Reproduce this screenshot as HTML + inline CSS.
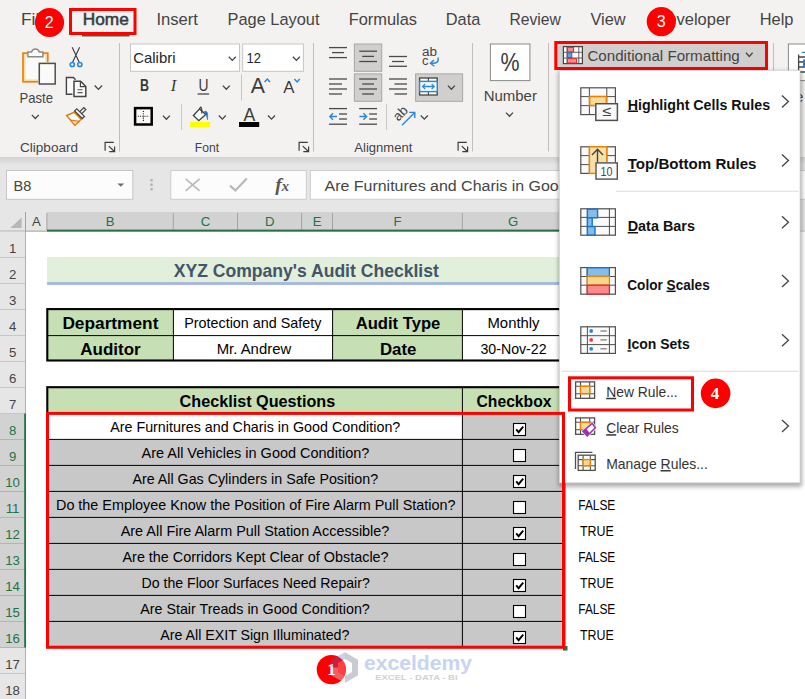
<!DOCTYPE html>
<html lang="en"><head><meta charset="utf-8"><title>Excel - Conditional Formatting New Rule</title>
<style>
html,body{margin:0;padding:0;background:#fff;overflow:hidden}
svg{display:block}
text{white-space:pre}
</style></head>
<body>
<svg width="805" height="699" viewBox="0 0 805 699">
<defs>
<linearGradient id="ribsh" x1="0" y1="0" x2="0" y2="1"><stop offset="0" stop-color="#d2d2d2"/><stop offset="1" stop-color="#e6e6e6"/></linearGradient>
<filter id="msh" x="-5%" y="-5%" width="110%" height="110%"><feGaussianBlur stdDeviation="2.2"/></filter>
</defs>
<rect x="0" y="0" width="805" height="157" fill="#f3f2f1" />
<rect x="0" y="157" width="805" height="8" fill="url(#ribsh)" />
<rect x="0" y="164" width="805" height="48" fill="#e6e6e6" />
<text x="21" y="25.2" font-family="'Liberation Sans',sans-serif" font-size="16.3" fill="#444444" textLength="28" lengthAdjust="spacingAndGlyphs" >File</text>
<text x="82.8" y="25.2" font-family="'Liberation Sans',sans-serif" font-size="16.4" fill="#3c3c3c" textLength="46" lengthAdjust="spacingAndGlyphs" stroke="#3c3c3c" stroke-width="0.55">Home</text>
<rect x="82" y="34.3" width="47.5" height="2.2" fill="#217346" />
<text x="156.4" y="25.2" font-family="'Liberation Sans',sans-serif" font-size="16.3" fill="#444444" textLength="41.6" lengthAdjust="spacingAndGlyphs" >Insert</text>
<text x="227.5" y="25.2" font-family="'Liberation Sans',sans-serif" font-size="16.3" fill="#444444" textLength="92" lengthAdjust="spacingAndGlyphs" >Page Layout</text>
<text x="348.7" y="25.2" font-family="'Liberation Sans',sans-serif" font-size="16.3" fill="#444444" textLength="68.3" lengthAdjust="spacingAndGlyphs" >Formulas</text>
<text x="445.8" y="25.2" font-family="'Liberation Sans',sans-serif" font-size="16.3" fill="#444444" textLength="34.5" lengthAdjust="spacingAndGlyphs" >Data</text>
<text x="509.5" y="25.2" font-family="'Liberation Sans',sans-serif" font-size="16.3" fill="#444444" textLength="51.4" lengthAdjust="spacingAndGlyphs" >Review</text>
<text x="590.4" y="25.2" font-family="'Liberation Sans',sans-serif" font-size="16.3" fill="#444444" textLength="35.2" lengthAdjust="spacingAndGlyphs" >View</text>
<text x="655.5" y="25.2" font-family="'Liberation Sans',sans-serif" font-size="16.3" fill="#444444" textLength="75.1" lengthAdjust="spacingAndGlyphs" >Developer</text>
<text x="759.7" y="25.2" font-family="'Liberation Sans',sans-serif" font-size="16.3" fill="#444444" textLength="33.8" lengthAdjust="spacingAndGlyphs" >Help</text>
<rect x="23" y="53.1" width="24.8" height="28.7" fill="#fbdf9d" stroke="#e8821a" stroke-width="1.7" />
<rect x="25.6" y="55.6" width="19.6" height="23.8" fill="#fafafa" />
<path d="M27.9 56.7 V52 H31.6 A3.9 3.9 0 0 1 39.2 52 H42.9 V56.7 Z" fill="#fafafa" stroke="#8a8a8a" stroke-width="1.4" />
<rect x="38" y="62" width="18.4" height="23.4" fill="#f3f2f1" />
<rect x="39.3" y="63.4" width="15.9" height="20.6" fill="#fafafa" stroke="#4f4f4f" stroke-width="1.5" />
<text x="19.5" y="103" font-family="'Liberation Sans',sans-serif" font-size="15" fill="#444444" textLength="33.5" lengthAdjust="spacingAndGlyphs" >Paste</text>
<path d="M31.799999999999997 114.9 L35.3 118.5 L38.8 114.9" fill="none" stroke="#444" stroke-width="1.3" />
<path d="M72.2 47.2 L79.2 62.2 M79.6 47.2 L72.6 62.2" fill="none" stroke="#444" stroke-width="1.2" />
<circle cx="72.3" cy="64.5" r="2.1" fill="none" stroke="#1e88e0" stroke-width="1.5"/>
<circle cx="79.8" cy="64.5" r="2.1" fill="none" stroke="#1e88e0" stroke-width="1.5"/>
<path d="M72.4 94.2 H66.4 V77.5 H73.4 L75.6 79.8" fill="#fafafa" stroke="#444" stroke-width="1.4" />
<path d="M74 81.3 H80.6 L85.8 86.5 V96.6 H74 Z" fill="#fafafa" stroke="#444" stroke-width="1.5" />
<path d="M80.4 81.6 V86.6 H85.6" fill="none" stroke="#444" stroke-width="1.2" />
<path d="M77.4 89.7 H82.6 M77.4 92.6 H82.6" fill="none" stroke="#555" stroke-width="1.1" />
<path d="M94.7 85.45 L98.4 89.35000000000001 L102.10000000000001 85.45" fill="none" stroke="#444" stroke-width="1.3" />
<path d="M66.6 115.5 L74 112.3 L81.2 119.3 L74.9 125.3 Z" fill="#fafafa" stroke="#e07a10" stroke-width="1.4" />
<path d="M70.6 120 L79 121.4 L74.9 125.3 Z" fill="#fbdf9d" stroke="#e07a10" stroke-width="1.1" />
<path d="M74.6 110.9 L76.8 108.8 L84.4 116.4 L82.2 118.5 Z" fill="#fafafa" stroke="#444" stroke-width="1.3" />
<path d="M79.8 111.6 L83.8 107.6 L85.8 109.6 L81.8 113.6" fill="none" stroke="#444" stroke-width="1.3" />
<text x="20" y="151.8" font-family="'Liberation Sans',sans-serif" font-size="12.8" fill="#444444" textLength="58" lengthAdjust="spacingAndGlyphs" >Clipboard</text>
<path d="M105.1 150.70000000000002 V142.3 H113.8" fill="none" stroke="#3c3c3c" stroke-width="1.2" />
<path d="M108.8 146.10000000000002 L114.39999999999999 151.5 M114.6 146.4 V151.60000000000002 H109.3" fill="none" stroke="#3c3c3c" stroke-width="1.2" />
<line x1="119.5" y1="43" x2="119.5" y2="151.5" stroke="#c0bfbe" stroke-width="1" />
<rect x="130.5" y="44" width="109" height="27.3" fill="#fff" stroke="#c6c5c4" stroke-width="1" />
<rect x="242.7" y="44" width="60.7" height="27.3" fill="#fff" stroke="#c6c5c4" stroke-width="1" />
<text x="133.2" y="62.5" font-family="'Liberation Sans',sans-serif" font-size="14.4" fill="#262626" textLength="42.3" lengthAdjust="spacingAndGlyphs" >Calibri</text>
<path d="M228.8 56.800000000000004 L232.3 60.4 L235.8 56.800000000000004" fill="none" stroke="#444" stroke-width="1.3" />
<text x="246.6" y="62.5" font-family="'Liberation Sans',sans-serif" font-size="14.4" fill="#262626" textLength="14.4" lengthAdjust="spacingAndGlyphs" >12</text>
<path d="M292.9 56.800000000000004 L296.4 60.4 L299.9 56.800000000000004" fill="none" stroke="#444" stroke-width="1.3" />
<text x="140" y="91.3" font-family="'Liberation Sans',sans-serif" font-size="15.6" fill="#3b3b3b" font-weight="bold" textLength="9" lengthAdjust="spacingAndGlyphs" >B</text>
<text x="170.8" y="91.3" font-family="'Liberation Serif',serif" font-size="16.5" fill="#3b3b3b" font-style="italic" >I</text>
<text x="198.4" y="90.6" font-family="'Liberation Sans',sans-serif" font-size="15.6" fill="#3b3b3b" textLength="10" lengthAdjust="spacingAndGlyphs" >U</text>
<rect x="197.6" y="93.4" width="11.5" height="1.2" fill="#3b3b3b" />
<path d="M222.8 85.60000000000001 L226.3 89.2 L229.8 85.60000000000001" fill="none" stroke="#444" stroke-width="1.3" />
<line x1="241.5" y1="74.3" x2="241.5" y2="100.5" stroke="#c8c7c6" stroke-width="1" />
<text x="250.8" y="93" font-family="'Liberation Sans',sans-serif" font-size="21.6" fill="#3b3b3b" textLength="14.2" lengthAdjust="spacingAndGlyphs" >A</text>
<path d="M264.6 82 L267.3 79 L270 82" fill="none" stroke="#2b88d8" stroke-width="1.5" />
<text x="283.2" y="93" font-family="'Liberation Sans',sans-serif" font-size="16.8" fill="#3b3b3b" textLength="11.2" lengthAdjust="spacingAndGlyphs" >A</text>
<path d="M294.4 79 L297.1 82 L299.8 79" fill="none" stroke="#2b88d8" stroke-width="1.5" />
<rect x="135.1" y="108.1" width="16.6" height="16.4" fill="#fafafa" stroke="#000" stroke-width="2.5" />
<path d="M143.4 111 V122 M137.8 116.3 H149" fill="none" stroke="#222" stroke-width="1.1" stroke-dasharray="1.1 1.1"/>
<path d="M162.9 115.60000000000001 L166.4 119.2 L169.9 115.60000000000001" fill="none" stroke="#444" stroke-width="1.3" />
<line x1="181.6" y1="104" x2="181.6" y2="130" stroke="#c8c7c6" stroke-width="1" />
<path d="M193.4 115.5 L199.6 108.9 L205.7 114.4 L198.8 120.7 Z" fill="#fafafa" stroke="#3c3c3c" stroke-width="1.3" />
<path d="M199.6 109.6 Q199.8 107 200.9 107.2 Q201.9 107.4 201.8 113.6" fill="none" stroke="#3c3c3c" stroke-width="1.2" />
<path d="M204.4 111.4 Q206.2 110.4 207.4 112.8 Q208 116 207.5 119.8 Q206.6 115 205.4 113.6 Z" fill="#1e73c8" stroke="#1e73c8" stroke-width="0.6" />
<rect x="190" y="122" width="20.2" height="5" fill="#ffff00" />
<path d="M218.8 115.5 L222.3 119.1 L225.8 115.5" fill="none" stroke="#444" stroke-width="1.3" />
<text x="243.4" y="121" font-family="'Liberation Sans',sans-serif" font-size="17.6" fill="#3b3b3b" textLength="11.8" lengthAdjust="spacingAndGlyphs" >A</text>
<rect x="239" y="122" width="20.2" height="5" fill="#000" />
<path d="M268.0 115.5 L271.5 119.1 L275.0 115.5" fill="none" stroke="#444" stroke-width="1.3" />
<text x="194.8" y="151.8" font-family="'Liberation Sans',sans-serif" font-size="12.8" fill="#444444" textLength="24.2" lengthAdjust="spacingAndGlyphs" >Font</text>
<path d="M299.1 150.70000000000002 V142.3 H307.8" fill="none" stroke="#3c3c3c" stroke-width="1.2" />
<path d="M302.8 146.10000000000002 L308.40000000000003 151.5 M308.6 146.4 V151.60000000000002 H303.3" fill="none" stroke="#3c3c3c" stroke-width="1.2" />
<line x1="313.5" y1="43" x2="313.5" y2="151.5" stroke="#c0bfbe" stroke-width="1" />
<line x1="329" y1="47.6" x2="347" y2="47.6" stroke="#4a4a4a" stroke-width="1.3" />
<line x1="332" y1="52.6" x2="344" y2="52.6" stroke="#4a4a4a" stroke-width="1.3" />
<line x1="329" y1="57.6" x2="347" y2="57.6" stroke="#4a4a4a" stroke-width="1.3" />
<rect x="354.4" y="44" width="27.3" height="27.3" fill="#d0cfce" stroke="#a8a7a6" stroke-width="1" />
<line x1="359.2" y1="51.2" x2="377" y2="51.2" stroke="#4a4a4a" stroke-width="1.3" />
<line x1="362.2" y1="56.4" x2="374" y2="56.4" stroke="#4a4a4a" stroke-width="1.3" />
<line x1="359.2" y1="61.5" x2="377" y2="61.5" stroke="#4a4a4a" stroke-width="1.3" />
<line x1="389" y1="56.5" x2="407" y2="56.5" stroke="#4a4a4a" stroke-width="1.3" />
<line x1="392" y1="61.5" x2="404" y2="61.5" stroke="#4a4a4a" stroke-width="1.3" />
<line x1="389" y1="66.3" x2="407" y2="66.3" stroke="#4a4a4a" stroke-width="1.3" />
<line x1="329" y1="79" x2="347" y2="79" stroke="#4a4a4a" stroke-width="1.3" />
<line x1="329" y1="84" x2="342" y2="84" stroke="#4a4a4a" stroke-width="1.3" />
<line x1="329" y1="89" x2="347" y2="89" stroke="#4a4a4a" stroke-width="1.3" />
<line x1="329" y1="94" x2="342" y2="94" stroke="#4a4a4a" stroke-width="1.3" />
<rect x="354.4" y="73.9" width="27.3" height="27.4" fill="#d0cfce" stroke="#a8a7a6" stroke-width="1" />
<line x1="359.2" y1="79" x2="377" y2="79" stroke="#4a4a4a" stroke-width="1.3" />
<line x1="362.2" y1="84" x2="374" y2="84" stroke="#4a4a4a" stroke-width="1.3" />
<line x1="359.2" y1="89" x2="377" y2="89" stroke="#4a4a4a" stroke-width="1.3" />
<line x1="362.2" y1="94" x2="374" y2="94" stroke="#4a4a4a" stroke-width="1.3" />
<line x1="389" y1="79" x2="407" y2="79" stroke="#4a4a4a" stroke-width="1.3" />
<line x1="394.5" y1="84" x2="407" y2="84" stroke="#4a4a4a" stroke-width="1.3" />
<line x1="389" y1="89" x2="407" y2="89" stroke="#4a4a4a" stroke-width="1.3" />
<line x1="394.5" y1="94" x2="407" y2="94" stroke="#4a4a4a" stroke-width="1.3" />
<line x1="329" y1="108.6" x2="347" y2="108.6" stroke="#4a4a4a" stroke-width="1.3" />
<line x1="339" y1="114" x2="347" y2="114" stroke="#4a4a4a" stroke-width="1.3" />
<line x1="339" y1="119" x2="347" y2="119" stroke="#4a4a4a" stroke-width="1.3" />
<line x1="329" y1="124.2" x2="347" y2="124.2" stroke="#4a4a4a" stroke-width="1.3" />
<path d="M337 116.5 H329.8 M333 113.3 L329.8 116.5 L333 119.7" fill="none" stroke="#2b88d8" stroke-width="1.4" />
<line x1="359.2" y1="108.6" x2="377" y2="108.6" stroke="#4a4a4a" stroke-width="1.3" />
<line x1="369.2" y1="114" x2="377" y2="114" stroke="#4a4a4a" stroke-width="1.3" />
<line x1="369.2" y1="119" x2="377" y2="119" stroke="#4a4a4a" stroke-width="1.3" />
<line x1="359.2" y1="124.2" x2="377" y2="124.2" stroke="#4a4a4a" stroke-width="1.3" />
<path d="M359.4 116.5 H366.6 M363.4 113.3 L366.6 116.5 L363.4 119.7" fill="none" stroke="#2b88d8" stroke-width="1.4" />
<line x1="386.6" y1="104" x2="386.6" y2="130" stroke="#c8c7c6" stroke-width="1" />
<g transform="translate(401,113.8) rotate(-45)"><text x="-7.6" y="3.8" font-family="'Liberation Sans',sans-serif" font-size="13.4" fill="#444">ab</text></g>
<path d="M402 125.2 L414.2 113 M409.2 112.4 H414.8 V118" fill="none" stroke="#2b88d8" stroke-width="1.4" />
<path d="M420.8 115.5 L424.3 119.1 L427.8 115.5" fill="none" stroke="#444" stroke-width="1.3" />
<text x="422" y="55.6" font-family="'Liberation Sans',sans-serif" font-size="12.5" fill="#444444" textLength="15" lengthAdjust="spacingAndGlyphs" >ab</text>
<text x="422" y="65.2" font-family="'Liberation Sans',sans-serif" font-size="12.5" fill="#444444" textLength="6.4" lengthAdjust="spacingAndGlyphs" >c</text>
<path d="M438 57.4 Q439.6 64 431 63.2 M434 60 L430.4 63.2 L434.4 66.2" fill="none" stroke="#2b88d8" stroke-width="1.4" />
<rect x="415.6" y="73.9" width="47" height="27.4" fill="#d0cfce" stroke="#a8a7a6" stroke-width="1" />
<rect x="419.6" y="78" width="17.6" height="17" fill="#f8f8f8" stroke="#444" stroke-width="1.3" />
<line x1="428.4" y1="78" x2="428.4" y2="95" stroke="#444" stroke-width="1.1" />
<rect x="419.6" y="81.4" width="17.6" height="10.2" fill="#f4f9fe" stroke="#2b88d8" stroke-width="1.4" />
<path d="M422.6 86.5 H434.2 M425.2 83.9 L422.6 86.5 L425.2 89.1 M431.6 83.9 L434.2 86.5 L431.6 89.1" fill="none" stroke="#2b88d8" stroke-width="1.3" />
<path d="M447.9 85.60000000000001 L451.4 89.2 L454.9 85.60000000000001" fill="none" stroke="#444" stroke-width="1.3" />
<text x="354.3" y="151.8" font-family="'Liberation Sans',sans-serif" font-size="12.8" fill="#444444" textLength="58" lengthAdjust="spacingAndGlyphs" >Alignment</text>
<path d="M458.1 150.70000000000002 V142.3 H466.8" fill="none" stroke="#3c3c3c" stroke-width="1.2" />
<path d="M461.8 146.10000000000002 L467.40000000000003 151.5 M467.6 146.4 V151.60000000000002 H462.3" fill="none" stroke="#3c3c3c" stroke-width="1.2" />
<line x1="472.5" y1="43" x2="472.5" y2="151.5" stroke="#c0bfbe" stroke-width="1" />
<rect x="490.4" y="44" width="39.5" height="36.6" fill="#fff" stroke="#8a8988" stroke-width="1" />
<text x="500.4" y="71" font-family="'Liberation Sans',sans-serif" font-size="25" fill="#3b3b3b" textLength="19" lengthAdjust="spacingAndGlyphs" >%</text>
<text x="483.7" y="100.6" font-family="'Liberation Sans',sans-serif" font-size="14.6" fill="#444444" textLength="53.2" lengthAdjust="spacingAndGlyphs" >Number</text>
<path d="M506.0 112.60000000000001 L509.5 116.2 L513.0 112.60000000000001" fill="none" stroke="#444" stroke-width="1.3" />
<line x1="548.5" y1="43" x2="548.5" y2="151.5" stroke="#c0bfbe" stroke-width="1" />
<rect x="556" y="42.5" width="210.5" height="26" fill="#d0cfce" />
<rect x="555.8" y="42.5" width="210.7" height="26" fill="none" stroke="#fe0000" stroke-width="3" />
<rect x="563.4" y="46.6" width="19" height="17" fill="#fafafa" stroke="#444" stroke-width="1.2" />
<path d="M567 46.6 V63.6 M578.8 46.6 V63.6 M563.4 52.3 H582.4 M563.4 58 H582.4" fill="none" stroke="#555" stroke-width="0.9" />
<rect x="567.4" y="47.4" width="6.2" height="4.4" fill="#f98b8f" stroke="#d92c2c" stroke-width="1" />
<rect x="567.4" y="58.6" width="9.2" height="4.4" fill="#f98b8f" stroke="#d92c2c" stroke-width="1" />
<rect x="567.4" y="52.9" width="4.4" height="4.6" fill="#5aa2e6" stroke="#1f6fc4" stroke-width="1" />
<text x="587.4" y="60.8" font-family="'Liberation Sans',sans-serif" font-size="14.6" fill="#444444" textLength="152.4" lengthAdjust="spacingAndGlyphs" >Conditional Formatting</text>
<path d="M746.0 52.7 L749.3 56.5 L752.5999999999999 52.7" fill="none" stroke="#444" stroke-width="1.3" />
<line x1="773.5" y1="43" x2="773.5" y2="151.5" stroke="#c0bfbe" stroke-width="1" />
<rect x="788.4" y="44" width="30" height="36.6" fill="#fff" stroke="#8a8988" stroke-width="1" />
<path d="M798.6 54.5 V80 M798.6 57 H806 M798.6 62 H806 M798.6 67 H806 M798.6 72 H806" fill="none" stroke="#444" stroke-width="1.3" />
<rect x="803" y="59.5" width="4" height="8" fill="#2b7cd3" />
<path d="M801.8 52.4 H806" fill="none" stroke="#2b88d8" stroke-width="1.2" />
<text x="795.3" y="102" font-family="'Liberation Sans',sans-serif" font-size="14.6" fill="#444444" >e</text>
<circle cx="49.5" cy="22.5" r="14.6" fill="#fe0000"/>
<text x="49.3" y="27.9" font-family="'Liberation Sans',sans-serif" font-size="16" fill="#fff" text-anchor="middle" >2</text>
<rect x="70.5" y="9.5" width="64.5" height="24" fill="none" stroke="#fe0000" stroke-width="3" />
<circle cx="661.3" cy="21.6" r="14.6" fill="#fe0000"/>
<text x="661.1" y="27" font-family="'Liberation Sans',sans-serif" font-size="16" fill="#fff" text-anchor="middle" >3</text>
<rect x="6.5" y="170.5" width="126.3" height="28.8" fill="#fcfcfc" stroke="#c6c6c6" stroke-width="1" />
<text x="13.5" y="190.7" font-family="'Liberation Sans',sans-serif" font-size="15.2" fill="#444" textLength="17.8" lengthAdjust="spacingAndGlyphs" >B8</text>
<path d="M117.4 183.4 H124.2 L120.8 186.8 Z" fill="#6e6e6e" />
<rect x="150.4" y="179.1" width="2.3" height="2.3" fill="#b0b0b0" />
<rect x="150.4" y="183.6" width="2.3" height="2.3" fill="#b0b0b0" />
<rect x="150.4" y="188.1" width="2.3" height="2.3" fill="#b0b0b0" />
<rect x="170.8" y="170.5" width="135.5" height="28.8" fill="#fcfcfc" stroke="#cdcdcd" stroke-width="1" />
<path d="M185.6 178.8 L199.6 190.8 M199.6 178.8 L185.6 190.8" fill="none" stroke="#b9b9b9" stroke-width="1.6" />
<path d="M230 185.6 L235.4 190.4 L246.8 178.6" fill="none" stroke="#b9b9b9" stroke-width="2.2" />
<text x="275.2" y="190.6" font-family="'Liberation Serif',serif" font-size="19.5" fill="#585858" font-weight="bold" font-style="italic" >f</text>
<text x="281.8" y="190.8" font-family="'Liberation Serif',serif" font-size="14.5" fill="#585858" font-weight="bold" font-style="italic" >x</text>
<rect x="310.3" y="170.5" width="520" height="28.8" fill="#fff" stroke="#cdcdcd" stroke-width="1" />
<text x="324.5" y="190.8" font-family="'Liberation Sans',sans-serif" font-size="15.2" fill="#444" textLength="323.8" lengthAdjust="spacingAndGlyphs" >Are Furnitures and Charis in Good Condition?</text>
<rect x="0" y="212" width="805" height="19.6" fill="#e6e6e6" />
<rect x="47" y="212" width="517" height="19.6" fill="#d2d2d2" />
<path d="M21.6 217.4 V228 H10.4 Z" fill="#b7b7b7" />
<text x="36.5" y="225.6" font-family="'Liberation Sans',sans-serif" font-size="13.2" fill="#444" text-anchor="middle" >A</text>
<line x1="46.9" y1="213" x2="46.9" y2="230" stroke="#a3a3a3" stroke-width="1" />
<text x="110.2" y="225.6" font-family="'Liberation Sans',sans-serif" font-size="13.2" fill="#217346" text-anchor="middle" >B</text>
<line x1="173.3" y1="213" x2="173.3" y2="230" stroke="#a3a3a3" stroke-width="1" />
<text x="205.5" y="225.6" font-family="'Liberation Sans',sans-serif" font-size="13.2" fill="#217346" text-anchor="middle" >C</text>
<line x1="237.5" y1="213" x2="237.5" y2="230" stroke="#a3a3a3" stroke-width="1" />
<text x="269.65" y="225.6" font-family="'Liberation Sans',sans-serif" font-size="13.2" fill="#217346" text-anchor="middle" >D</text>
<line x1="301.59999999999997" y1="213" x2="301.59999999999997" y2="230" stroke="#a3a3a3" stroke-width="1" />
<text x="317.15" y="225.6" font-family="'Liberation Sans',sans-serif" font-size="13.2" fill="#217346" text-anchor="middle" >E</text>
<line x1="332.5" y1="213" x2="332.5" y2="230" stroke="#a3a3a3" stroke-width="1" />
<text x="397.5" y="225.6" font-family="'Liberation Sans',sans-serif" font-size="13.2" fill="#217346" text-anchor="middle" >F</text>
<line x1="462.29999999999995" y1="213" x2="462.29999999999995" y2="230" stroke="#a3a3a3" stroke-width="1" />
<text x="513.2" y="225.6" font-family="'Liberation Sans',sans-serif" font-size="13.2" fill="#217346" text-anchor="middle" >G</text>
<line x1="563.9" y1="213" x2="563.9" y2="230" stroke="#a3a3a3" stroke-width="1" />
<text x="596.25" y="225.6" font-family="'Liberation Sans',sans-serif" font-size="13.2" fill="#444" text-anchor="middle" >H</text>
<line x1="628.4" y1="213" x2="628.4" y2="230" stroke="#c3c3c3" stroke-width="1" />
<text x="660.5" y="225.6" font-family="'Liberation Sans',sans-serif" font-size="13.2" fill="#444" text-anchor="middle" >I</text>
<line x1="692.4" y1="213" x2="692.4" y2="230" stroke="#c3c3c3" stroke-width="1" />
<text x="724.5" y="225.6" font-family="'Liberation Sans',sans-serif" font-size="13.2" fill="#444" text-anchor="middle" >J</text>
<line x1="756.4" y1="213" x2="756.4" y2="230" stroke="#c3c3c3" stroke-width="1" />
<text x="788.25" y="225.6" font-family="'Liberation Sans',sans-serif" font-size="13.2" fill="#444" text-anchor="middle" >K</text>
<line x1="819.9" y1="213" x2="819.9" y2="230" stroke="#c3c3c3" stroke-width="1" />
<line x1="25.5" y1="212" x2="25.5" y2="699" stroke="#a3a3a3" stroke-width="1" />
<line x1="0" y1="231.1" x2="47" y2="231.1" stroke="#a3a3a3" stroke-width="1" />
<line x1="564" y1="231.1" x2="805" y2="231.1" stroke="#c6c6c6" stroke-width="1" />
<rect x="47" y="229.6" width="517" height="2" fill="#217346" />
<rect x="0" y="231.6" width="25.2" height="468" fill="#e6e6e6" />
<rect x="0" y="413.5" width="25.2" height="234" fill="#d2d2d2" />
<text x="12.6" y="252.8" font-family="'Liberation Sans',sans-serif" font-size="13.2" fill="#444" text-anchor="middle" >1</text>
<line x1="0" y1="257.5" x2="25.2" y2="257.5" stroke="#c6c6c6" stroke-width="1" />
<text x="12.6" y="278.8" font-family="'Liberation Sans',sans-serif" font-size="13.2" fill="#444" text-anchor="middle" >2</text>
<line x1="0" y1="283.5" x2="25.2" y2="283.5" stroke="#c6c6c6" stroke-width="1" />
<text x="12.6" y="304.8" font-family="'Liberation Sans',sans-serif" font-size="13.2" fill="#444" text-anchor="middle" >3</text>
<line x1="0" y1="309.5" x2="25.2" y2="309.5" stroke="#c6c6c6" stroke-width="1" />
<text x="12.6" y="330.8" font-family="'Liberation Sans',sans-serif" font-size="13.2" fill="#444" text-anchor="middle" >4</text>
<line x1="0" y1="335.5" x2="25.2" y2="335.5" stroke="#c6c6c6" stroke-width="1" />
<text x="12.6" y="356.8" font-family="'Liberation Sans',sans-serif" font-size="13.2" fill="#444" text-anchor="middle" >5</text>
<line x1="0" y1="361.5" x2="25.2" y2="361.5" stroke="#c6c6c6" stroke-width="1" />
<text x="12.6" y="382.8" font-family="'Liberation Sans',sans-serif" font-size="13.2" fill="#444" text-anchor="middle" >6</text>
<line x1="0" y1="387.5" x2="25.2" y2="387.5" stroke="#c6c6c6" stroke-width="1" />
<text x="12.6" y="408.8" font-family="'Liberation Sans',sans-serif" font-size="13.2" fill="#444" text-anchor="middle" >7</text>
<line x1="0" y1="413.5" x2="25.2" y2="413.5" stroke="#c6c6c6" stroke-width="1" />
<text x="12.6" y="434.8" font-family="'Liberation Sans',sans-serif" font-size="13.2" fill="#217346" text-anchor="middle" >8</text>
<line x1="0" y1="439.5" x2="25.2" y2="439.5" stroke="#b4b4b4" stroke-width="1" />
<text x="12.6" y="460.8" font-family="'Liberation Sans',sans-serif" font-size="13.2" fill="#217346" text-anchor="middle" >9</text>
<line x1="0" y1="465.5" x2="25.2" y2="465.5" stroke="#b4b4b4" stroke-width="1" />
<text x="12.6" y="486.8" font-family="'Liberation Sans',sans-serif" font-size="13.2" fill="#217346" text-anchor="middle" >10</text>
<line x1="0" y1="491.5" x2="25.2" y2="491.5" stroke="#b4b4b4" stroke-width="1" />
<text x="12.6" y="512.8" font-family="'Liberation Sans',sans-serif" font-size="13.2" fill="#217346" text-anchor="middle" >11</text>
<line x1="0" y1="517.5" x2="25.2" y2="517.5" stroke="#b4b4b4" stroke-width="1" />
<text x="12.6" y="538.8" font-family="'Liberation Sans',sans-serif" font-size="13.2" fill="#217346" text-anchor="middle" >12</text>
<line x1="0" y1="543.5" x2="25.2" y2="543.5" stroke="#b4b4b4" stroke-width="1" />
<text x="12.6" y="564.8" font-family="'Liberation Sans',sans-serif" font-size="13.2" fill="#217346" text-anchor="middle" >13</text>
<line x1="0" y1="569.5" x2="25.2" y2="569.5" stroke="#b4b4b4" stroke-width="1" />
<text x="12.6" y="590.8" font-family="'Liberation Sans',sans-serif" font-size="13.2" fill="#217346" text-anchor="middle" >14</text>
<line x1="0" y1="595.5" x2="25.2" y2="595.5" stroke="#b4b4b4" stroke-width="1" />
<text x="12.6" y="616.8" font-family="'Liberation Sans',sans-serif" font-size="13.2" fill="#217346" text-anchor="middle" >15</text>
<line x1="0" y1="621.5" x2="25.2" y2="621.5" stroke="#b4b4b4" stroke-width="1" />
<text x="12.6" y="642.8" font-family="'Liberation Sans',sans-serif" font-size="13.2" fill="#217346" text-anchor="middle" >16</text>
<line x1="0" y1="647.5" x2="25.2" y2="647.5" stroke="#b4b4b4" stroke-width="1" />
<text x="12.6" y="668.8" font-family="'Liberation Sans',sans-serif" font-size="13.2" fill="#444" text-anchor="middle" >17</text>
<line x1="0" y1="673.5" x2="25.2" y2="673.5" stroke="#c6c6c6" stroke-width="1" />
<text x="12.6" y="694.8" font-family="'Liberation Sans',sans-serif" font-size="13.2" fill="#444" text-anchor="middle" >18</text>
<line x1="0" y1="699.5" x2="25.2" y2="699.5" stroke="#c6c6c6" stroke-width="1" />
<rect x="24.2" y="413.5" width="2" height="234" fill="#217346" />
<rect x="26.2" y="232" width="780" height="468" fill="#fff" />
<rect x="47" y="257" width="517" height="25" fill="#e2efda" />
<rect x="47" y="282" width="517" height="3" fill="#a9b9e2" />
<text x="173.8" y="276.8" font-family="'Liberation Sans',sans-serif" font-size="17.8" fill="#44546a" font-weight="bold" textLength="265" lengthAdjust="spacingAndGlyphs" >XYZ Company's Audit Checklist</text>
<rect x="47.3" y="309" width="516" height="51.6" fill="#fff" />
<rect x="47.3" y="309" width="126" height="51.6" fill="#c6e0b4" />
<rect x="332.6" y="309" width="129.8" height="51.6" fill="#c6e0b4" />
<line x1="47" y1="335.6" x2="564" y2="335.6" stroke="#000" stroke-width="1" />
<line x1="173.4" y1="309" x2="173.4" y2="361" stroke="#000" stroke-width="1" />
<line x1="332.6" y1="309" x2="332.6" y2="361" stroke="#000" stroke-width="1" />
<line x1="462.4" y1="309" x2="462.4" y2="361" stroke="#000" stroke-width="1" />
<rect x="47.3" y="309.1" width="517" height="51.4" fill="none" stroke="#000" stroke-width="2.1" />
<text x="62.4" y="328.8" font-family="'Liberation Sans',sans-serif" font-size="15.6" fill="#000" font-weight="bold" textLength="96" lengthAdjust="spacingAndGlyphs" >Department</text>
<text x="80.3" y="354.5" font-family="'Liberation Sans',sans-serif" font-size="15.6" fill="#000" font-weight="bold" textLength="60.4" lengthAdjust="spacingAndGlyphs" >Auditor</text>
<text x="355.7" y="328.8" font-family="'Liberation Sans',sans-serif" font-size="15.6" fill="#000" font-weight="bold" textLength="84.6" lengthAdjust="spacingAndGlyphs" >Audit Type</text>
<text x="379.9" y="354.5" font-family="'Liberation Sans',sans-serif" font-size="15.6" fill="#000" font-weight="bold" textLength="36.5" lengthAdjust="spacingAndGlyphs" >Date</text>
<text x="184.2" y="328.3" font-family="'Liberation Sans',sans-serif" font-size="14.4" fill="#000" textLength="137.2" lengthAdjust="spacingAndGlyphs" >Protection and Safety</text>
<text x="216.7" y="353.7" font-family="'Liberation Sans',sans-serif" font-size="14.4" fill="#000" textLength="74.5" lengthAdjust="spacingAndGlyphs" >Mr. Andrew</text>
<text x="487.5" y="328.3" font-family="'Liberation Sans',sans-serif" font-size="14.4" fill="#000" textLength="52" lengthAdjust="spacingAndGlyphs" >Monthly</text>
<text x="480.5" y="353.7" font-family="'Liberation Sans',sans-serif" font-size="14.4" fill="#000" textLength="66" lengthAdjust="spacingAndGlyphs" >30-Nov-22</text>
<rect x="47.3" y="387.2" width="517" height="26.3" fill="#c6e0b4" />
<rect x="47.3" y="413.5" width="517" height="234" fill="#c8c8c8" />
<rect x="47.3" y="413.5" width="415" height="26" fill="#fff" />
<line x1="47" y1="439.4" x2="564" y2="439.4" stroke="#000" stroke-width="1" />
<line x1="47" y1="465.4" x2="564" y2="465.4" stroke="#000" stroke-width="1" />
<line x1="47" y1="491.4" x2="564" y2="491.4" stroke="#000" stroke-width="1" />
<line x1="47" y1="517.4" x2="564" y2="517.4" stroke="#000" stroke-width="1" />
<line x1="47" y1="543.4" x2="564" y2="543.4" stroke="#000" stroke-width="1" />
<line x1="47" y1="569.4" x2="564" y2="569.4" stroke="#000" stroke-width="1" />
<line x1="47" y1="595.4" x2="564" y2="595.4" stroke="#000" stroke-width="1" />
<line x1="47" y1="621.4" x2="564" y2="621.4" stroke="#000" stroke-width="1" />
<line x1="462.4" y1="387" x2="462.4" y2="647.5" stroke="#000" stroke-width="1" />
<rect x="47.3" y="387.2" width="517" height="260" fill="none" stroke="#000" stroke-width="2.1" />
<text x="179.6" y="406.7" font-family="'Liberation Sans',sans-serif" font-size="15.6" fill="#000" font-weight="bold" textLength="155.6" lengthAdjust="spacingAndGlyphs" >Checklist Questions</text>
<text x="476.5" y="406.7" font-family="'Liberation Sans',sans-serif" font-size="15.6" fill="#000" font-weight="bold" textLength="75" lengthAdjust="spacingAndGlyphs" >Checkbox</text>
<text x="110.2" y="431.8" font-family="'Liberation Sans',sans-serif" font-size="14.4" fill="#000" textLength="290.1" lengthAdjust="spacingAndGlyphs" >Are Furnitures and Charis in Good Condition?</text>
<rect x="513.5" y="423.5" width="12" height="12" fill="#fff" stroke="#000" stroke-width="1.1" />
<path d="M516.2 429.4 L518.6 432.2 L523.2 426.6" fill="none" stroke="#000" stroke-width="1.9" />
<text x="141.5" y="457.8" font-family="'Liberation Sans',sans-serif" font-size="14.4" fill="#000" textLength="227.8" lengthAdjust="spacingAndGlyphs" >Are All Vehicles in Good Condition?</text>
<rect x="513.5" y="449.5" width="12" height="12" fill="#fff" stroke="#000" stroke-width="1.1" />
<text x="132.4" y="483.8" font-family="'Liberation Sans',sans-serif" font-size="14.4" fill="#000" textLength="245.7" lengthAdjust="spacingAndGlyphs" >Are All Gas Cylinders in Safe Position?</text>
<rect x="513.5" y="475.5" width="12" height="12" fill="#fff" stroke="#000" stroke-width="1.1" />
<path d="M516.2 481.4 L518.6 484.2 L523.2 478.6" fill="none" stroke="#000" stroke-width="1.9" />
<text x="56" y="509.8" font-family="'Liberation Sans',sans-serif" font-size="14.4" fill="#000" textLength="399.4" lengthAdjust="spacingAndGlyphs" >Do the Employee Know the Position of Fire Alarm Pull Station?</text>
<rect x="513.5" y="501.5" width="12" height="12" fill="#fff" stroke="#000" stroke-width="1.1" />
<text x="596.8" y="509.8" font-family="'Liberation Sans',sans-serif" font-size="14.4" fill="#000" text-anchor="middle" textLength="37" lengthAdjust="spacingAndGlyphs" >FALSE</text>
<text x="120.7" y="535.8" font-family="'Liberation Sans',sans-serif" font-size="14.4" fill="#000" textLength="268.7" lengthAdjust="spacingAndGlyphs" >Are All Fire Alarm Pull Station Accessible?</text>
<rect x="513.5" y="527.5" width="12" height="12" fill="#fff" stroke="#000" stroke-width="1.1" />
<path d="M516.2 533.4 L518.6 536.2 L523.2 530.6" fill="none" stroke="#000" stroke-width="1.9" />
<text x="596.8" y="535.8" font-family="'Liberation Sans',sans-serif" font-size="14.4" fill="#000" text-anchor="middle" textLength="33.8" lengthAdjust="spacingAndGlyphs" >TRUE</text>
<text x="122.5" y="561.8" font-family="'Liberation Sans',sans-serif" font-size="14.4" fill="#000" textLength="266.1" lengthAdjust="spacingAndGlyphs" >Are the Corridors Kept Clear of Obstacle?</text>
<rect x="513.5" y="553.5" width="12" height="12" fill="#fff" stroke="#000" stroke-width="1.1" />
<text x="596.8" y="561.8" font-family="'Liberation Sans',sans-serif" font-size="14.4" fill="#000" text-anchor="middle" textLength="37" lengthAdjust="spacingAndGlyphs" >FALSE</text>
<text x="141.5" y="587.8" font-family="'Liberation Sans',sans-serif" font-size="14.4" fill="#000" textLength="228.3" lengthAdjust="spacingAndGlyphs" >Do the Floor Surfaces Need Repair?</text>
<rect x="513.5" y="579.5" width="12" height="12" fill="#fff" stroke="#000" stroke-width="1.1" />
<path d="M516.2 585.4 L518.6 588.2 L523.2 582.6" fill="none" stroke="#000" stroke-width="1.9" />
<text x="596.8" y="587.8" font-family="'Liberation Sans',sans-serif" font-size="14.4" fill="#000" text-anchor="middle" textLength="33.8" lengthAdjust="spacingAndGlyphs" >TRUE</text>
<text x="140.2" y="613.8" font-family="'Liberation Sans',sans-serif" font-size="14.4" fill="#000" textLength="229.6" lengthAdjust="spacingAndGlyphs" >Are Stair Treads in Good Condition?</text>
<rect x="513.5" y="605.5" width="12" height="12" fill="#fff" stroke="#000" stroke-width="1.1" />
<text x="596.8" y="613.8" font-family="'Liberation Sans',sans-serif" font-size="14.4" fill="#000" text-anchor="middle" textLength="37" lengthAdjust="spacingAndGlyphs" >FALSE</text>
<text x="160.3" y="639.8" font-family="'Liberation Sans',sans-serif" font-size="14.4" fill="#000" textLength="189.1" lengthAdjust="spacingAndGlyphs" >Are All EXIT Sign Illuminated?</text>
<rect x="513.5" y="631.5" width="12" height="12" fill="#fff" stroke="#000" stroke-width="1.1" />
<path d="M516.2 637.4 L518.6 640.2 L523.2 634.6" fill="none" stroke="#000" stroke-width="1.9" />
<text x="596.8" y="639.8" font-family="'Liberation Sans',sans-serif" font-size="14.4" fill="#000" text-anchor="middle" textLength="33.8" lengthAdjust="spacingAndGlyphs" >TRUE</text>
<rect x="563" y="646" width="4.5" height="4.5" fill="#217346" />
<circle cx="331.4" cy="669.6" r="14.7" fill="#fe0000"/>
<text x="331.4" y="674.9" font-family="'Liberation Serif',serif" font-size="17" fill="#fff" font-weight="bold" text-anchor="middle" >1</text>
<path d="M345 652.2 L358 659.8 V675.3 L345 682.9 L345 676 L352 672 V663 L345 659 Z" fill="#48556a" fill-opacity="0.3"/>
<path d="M345 652.2 L345 659 L338 663 V667.5 L331 667.5 V659.8 Z" fill="#496bc3" fill-opacity="0.3"/>
<path d="M331 667.5 H338 V672 L345 676 V682.9 L331 675.3 Z" fill="#e1e8f6" fill-opacity="0.4"/>
<path d="M338 663 L345 659 L352 663 V672 L345 676 L338 672 Z" fill="#ffffff" fill-opacity="0.25"/>
<text x="364" y="669.8" font-family="'Liberation Sans',sans-serif" font-size="20.6" fill="#c9d3f3" font-weight="bold" textLength="108" lengthAdjust="spacingAndGlyphs" >exceldemy</text>
<text x="375.2" y="679.5" font-family="'Liberation Sans',sans-serif" font-size="6.8" fill="#d2d2d2" font-weight="bold" textLength="82.4" lengthAdjust="spacingAndGlyphs" >EXCEL - DATA - BI</text>
<rect x="558.5" y="71.4" width="243.5" height="415.4" fill="#000" fill-opacity="0.33" filter="url(#msh)"/>
<rect x="559.5" y="70.4" width="240.5" height="412.4" fill="#fff" stroke="#d6d6d6" stroke-width="0.8" />
<rect x="580.8" y="87.8" width="34.6" height="26.8" fill="#fafafa" stroke="#505050" stroke-width="1.2" />
<path d="M589.4 87.8 V114.6 M606.8 87.8 V114.6 M580.8 96.6 H615.4 M580.8 105.6 H615.4 " fill="none" stroke="#505050" stroke-width="1" />
<rect x="589.6" y="96.5" width="16.8" height="9" fill="#fbdc93" stroke="#e8810c" stroke-width="1.6" />
<rect x="594.9" y="102.8" width="23.3" height="18.4" fill="#fff" />
<rect x="595.8" y="103.7" width="21.6" height="16.7" fill="#fafafa" stroke="#505050" stroke-width="1.5" />
<text x="602.4" y="116.4" font-family="'Liberation Sans',sans-serif" font-size="14" fill="#444" textLength="9" lengthAdjust="spacingAndGlyphs" >≤</text>
<text x="627.7" y="109.5" font-family="'Liberation Sans',sans-serif" font-size="14.9" fill="#111" font-weight="bold" textLength="142.4" lengthAdjust="spacingAndGlyphs" ><tspan text-decoration="underline">H</tspan>ighlight Cells Rules</text>
<path d="M781.95 95.5 L788.45 101.5 L781.95 107.5" fill="none" stroke="#444" stroke-width="1.3" />
<rect x="580.8" y="146.8" width="34.6" height="26.6" fill="#fafafa" stroke="#505050" stroke-width="1.2" />
<path d="M589.4 146.8 V173.4 M606.8 146.8 V173.4 M580.8 155.6 H615.4 M580.8 164.6 H615.4 " fill="none" stroke="#505050" stroke-width="1" />
<rect x="589.4" y="146.8" width="17.4" height="26.6" fill="#fbe0a6" stroke="#e8850f" stroke-width="1.5" />
<path d="M597.5 162.6 V149.4 M592 154.9 L597.5 149.2 L603 154.9" fill="none" stroke="#444" stroke-width="1.4" />
<rect x="595.2" y="162.2" width="22.8" height="17.6" fill="#fff" />
<rect x="596" y="162.9" width="21.3" height="16.2" fill="#fafafa" stroke="#505050" stroke-width="1.4" />
<text x="600.6" y="175.5" font-family="'Liberation Sans',sans-serif" font-size="12.6" fill="#4a4a4a" textLength="12" lengthAdjust="spacingAndGlyphs" >10</text>
<text x="627.7" y="169.4" font-family="'Liberation Sans',sans-serif" font-size="14.8" fill="#111" font-weight="bold" textLength="128.8" lengthAdjust="spacingAndGlyphs" ><tspan text-decoration="underline">T</tspan>op/Bottom Rules</text>
<path d="M781.95 154.4 L788.45 160.4 L781.95 166.4" fill="none" stroke="#444" stroke-width="1.3" />
<line x1="616.2" y1="191.2" x2="798.6" y2="191.2" stroke="#dadada" stroke-width="1" />
<rect x="580.8" y="208.8" width="34.6" height="26.4" fill="#fafafa" stroke="#505050" stroke-width="1.2" />
<path d="M587.4 208.8 V235.20000000000002 M609.4 208.8 V235.20000000000002 M580.8 217.4 H615.4 M580.8 226.4 H615.4 " fill="none" stroke="#505050" stroke-width="1" />
<rect x="587.4" y="209.2" width="10.2" height="8.6" fill="#85bdea" stroke="#1a74c7" stroke-width="1.4" />
<rect x="587.4" y="217.8" width="4.8" height="8.8" fill="#85bdea" stroke="#1a74c7" stroke-width="1.4" />
<rect x="587.4" y="226.6" width="7.6" height="8.4" fill="#85bdea" stroke="#1a74c7" stroke-width="1.4" />
<text x="627.7" y="231" font-family="'Liberation Sans',sans-serif" font-size="14.8" fill="#111" font-weight="bold" textLength="67.2" lengthAdjust="spacingAndGlyphs" ><tspan text-decoration="underline">D</tspan>ata Bars</text>
<path d="M781.95 216.2 L788.45 222.2 L781.95 228.2" fill="none" stroke="#444" stroke-width="1.3" />
<rect x="580.8" y="267.6" width="34.6" height="26.6" fill="#fafafa" stroke="#505050" stroke-width="1.2" />
<path d="M587.2 267.6 V294.20000000000005 M609.4 267.6 V294.20000000000005 M580.8 276.5 H615.4 M580.8 285.2 H615.4 " fill="none" stroke="#505050" stroke-width="1" />
<rect x="587.2" y="267.8" width="22.2" height="8.7" fill="#85bdea" stroke="#1f6fc4" stroke-width="1.3" />
<rect x="587.2" y="276.5" width="22.2" height="8.7" fill="#fad68c" stroke="#e08a1e" stroke-width="1.3" />
<rect x="587.2" y="285.2" width="22.2" height="8.8" fill="#f98b8f" stroke="#d92c2c" stroke-width="1.3" />
<text x="627.3" y="289.6" font-family="'Liberation Sans',sans-serif" font-size="14.8" fill="#111" font-weight="bold" textLength="82.4" lengthAdjust="spacingAndGlyphs" >Color <tspan text-decoration="underline">S</tspan>cales</text>
<path d="M781.95 275.0 L788.45 281 L781.95 287.0" fill="none" stroke="#444" stroke-width="1.3" />
<rect x="580.8" y="326.8" width="34.6" height="26.6" fill="#fafafa" stroke="#505050" stroke-width="1.2" />
<path d="M587.4 326.8 V353.40000000000003 M609.4 326.8 V353.40000000000003 M580.8 335.7 H615.4 M580.8 344.6 H615.4 " fill="none" stroke="#505050" stroke-width="1" />
<circle cx="591.2" cy="331" r="1.9" fill="#2b88d8"/>
<line x1="600.4" y1="331" x2="606.8" y2="331" stroke="#777" stroke-width="1.2" />
<circle cx="591.2" cy="339.9" r="1.9" fill="#f03a3a"/>
<line x1="600.4" y1="339.9" x2="606.8" y2="339.9" stroke="#777" stroke-width="1.2" />
<circle cx="591.2" cy="348.8" r="1.9" fill="#2b88d8"/>
<line x1="600.4" y1="348.8" x2="606.8" y2="348.8" stroke="#777" stroke-width="1.2" />
<text x="627.5" y="349.2" font-family="'Liberation Sans',sans-serif" font-size="14.8" fill="#111" font-weight="bold" textLength="62.2" lengthAdjust="spacingAndGlyphs" ><tspan text-decoration="underline">I</tspan>con Sets</text>
<path d="M781.95 334.3 L788.45 340.3 L781.95 346.3" fill="none" stroke="#444" stroke-width="1.3" />
<line x1="561.4" y1="371.2" x2="798.6" y2="371.2" stroke="#dadada" stroke-width="1" />
<rect x="575.6" y="381.9" width="19" height="16.4" fill="#fff" stroke="#505050" stroke-width="1.3" />
<path d="M580.5 381.9 V398.29999999999995 M589.7 381.9 V398.29999999999995 M575.6 386.29999999999995 H594.6 M575.6 393.69999999999993 H594.6" fill="none" stroke="#505050" stroke-width="1.1" />
<rect x="580.5" y="386.29999999999995" width="9.2" height="7.399999999999999" fill="#fbd893" stroke="#e8850f" stroke-width="1.5" />
<text x="606.2" y="396.8" font-family="'Liberation Sans',sans-serif" font-size="14.8" fill="#333" textLength="71.5" lengthAdjust="spacingAndGlyphs" ><tspan text-decoration="underline">N</tspan>ew Rule...</text>
<rect x="569.5" y="377.8" width="123" height="32.2" fill="none" stroke="#fe0000" stroke-width="3" />
<circle cx="715.6" cy="393.4" r="14.8" fill="#fe0000"/>
<text x="715" y="398.9" font-family="'Liberation Serif',serif" font-size="17" fill="#fff" font-weight="bold" text-anchor="middle" >4</text>
<rect x="575.6" y="417.9" width="19" height="16.4" fill="#fff" stroke="#505050" stroke-width="1.3" />
<path d="M580.5 417.9 V434.29999999999995 M589.7 417.9 V434.29999999999995 M575.6 422.29999999999995 H594.6 M575.6 429.69999999999993 H594.6" fill="none" stroke="#505050" stroke-width="1.1" />
<rect x="580.5" y="422.29999999999995" width="9.2" height="7.399999999999999" fill="#fbd893" stroke="#e8850f" stroke-width="1.5" />
<path d="M582.9 431.4 L592.1 423.4 L595.4 427.8 L587.2 435.9 Z" fill="#fff" stroke="#fff" stroke-width="2.6" />
<path d="M582.9 431.4 L592.1 423.4 L595.4 427.8 L587.2 435.9 Z" fill="#fff" stroke="#a02cb8" stroke-width="1.5" />
<path d="M583.6 431.6 L586.4 428.9 L589.8 433.2 L587.2 435.6 Z" fill="#a02cb8" />
<text x="606.2" y="433.2" font-family="'Liberation Sans',sans-serif" font-size="14.8" fill="#333" textLength="72.5" lengthAdjust="spacingAndGlyphs" ><tspan text-decoration="underline">C</tspan>lear Rules</text>
<path d="M781.95 420.0 L788.45 426 L781.95 432.0" fill="none" stroke="#444" stroke-width="1.3" />
<path d="M575.5 469 V452.4 H592.4" fill="none" stroke="#505050" stroke-width="1.3" />
<rect x="578.2" y="455.2" width="17" height="15.2" fill="#fff" stroke="#505050" stroke-width="1.3" />
<path d="M583.1 455.2 V470.4 M590.3000000000001 455.2 V470.4 M578.2 459.59999999999997 H595.2 M578.2 465.79999999999995 H595.2" fill="none" stroke="#505050" stroke-width="1.1" />
<rect x="583.1" y="459.59999999999997" width="7.199999999999999" height="6.199999999999999" fill="#fbd893" stroke="#e8850f" stroke-width="1.5" />
<text x="606.2" y="469" font-family="'Liberation Sans',sans-serif" font-size="14.8" fill="#333" textLength="101.7" lengthAdjust="spacingAndGlyphs" >Manage <tspan text-decoration="underline">R</tspan>ules...</text>
<rect x="47.5" y="413.4" width="516" height="233.8" fill="none" stroke="#fe0000" stroke-width="3" />
</svg>
</body></html>
